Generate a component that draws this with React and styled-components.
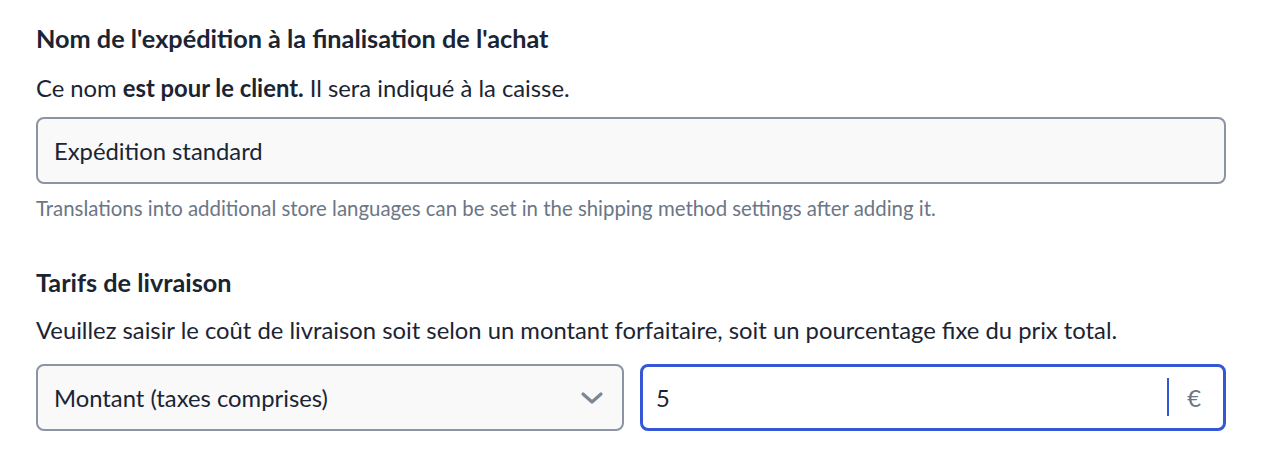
import React from "react";
import styled, { createGlobalStyle } from "styled-components";

const Global = createGlobalStyle`
  html, body { margin: 0; padding: 0; background: #ffffff; }
  body { font-family: Lato, "Open Sans", sans-serif; color: #1b2433; -webkit-font-smoothing: antialiased; }
  * { box-sizing: border-box; }
`;

const Page = styled.div`
  width: 1284px;
  padding: 22px 58px 0 36px;
  display: flex;
  flex-direction: column;
`;

const Section = styled.section`
  display: flex;
  flex-direction: column;
  margin-bottom: ${(p) => p.$mb || 0}px;
`;

const Title = styled.h2`
  margin: 0;
  font-size: 25.25px;
  line-height: 32px;
  font-weight: 700;
  color: #1b2433;
`;

const Desc = styled.p`
  margin: ${(p) => p.$mt || 16}px 0 ${(p) => p.$mb || 15}px;
  font-size: 23.8px;
  line-height: 32px;
  font-weight: 400;
  color: #1b2433;
  b { font-weight: 700; }
`;

const Field = styled.div`
  height: 67px;
  border: ${(p) => (p.$focus ? "3px solid #3557d6" : "2px solid #8b94a2")};
  border-radius: 8px;
  background: ${(p) => (p.$focus ? "#ffffff" : "#f9f9fa")};
  display: flex;
  align-items: center;
  padding-left: ${(p) => (p.$focus ? 13 : 16)}px;
  min-width: 0;
  font-size: 23.8px;
  color: #1b2433;
`;

const FieldText = styled.span`
  flex: 1;
`;

const Hint = styled.p`
  margin: 12px 0 0;
  font-size: 20.4px;
  line-height: 24px;
  color: #6b7686;
`;

const Row = styled.div`
  display: grid;
  grid-template-columns: 588px 1fr;
  gap: 16px;
`;

const Chevron = styled.svg`
  width: 24px;
  height: 14px;
  margin-right: 18px;
`;

const Suffix = styled.div`
  display: flex;
  align-items: center;
  height: 100%;
  padding: 0 22px 0 20px;
  position: relative;
  color: #6b7686;
  font-size: 23.8px;
  &::before {
    content: "";
    position: absolute;
    left: 0;
    top: 11px;
    bottom: 12px;
    width: 2px;
    background: #3557d6;
  }
`;

export default function App() {
  return (
    <>
      <Global />
      <Page>
        <Section $mb={46}>
          <Title>Nom de l'expédition à la finalisation de l'achat</Title>
          <Desc $mt={18} $mb={13}>
            Ce nom <b>est pour le client.</b> Il sera indiqué à la caisse.
          </Desc>
          <Field>
            <FieldText>Expédition standard</FieldText>
          </Field>
          <Hint>
            Translations into additional store languages can be set in the shipping method settings after adding it.
          </Hint>
        </Section>
        <Section>
          <Title>Tarifs de livraison</Title>
          <Desc $mb={18}>
            Veuillez saisir le coût de livraison soit selon un montant forfaitaire, soit un pourcentage fixe du prix total.
          </Desc>
          <Row>
            <Field>
              <FieldText>Montant (taxes comprises)</FieldText>
              <Chevron viewBox="0 0 24 14">
                <path d="M3 3 L12 11 L21 3" fill="none" stroke="#7c8796" strokeWidth="3.2" strokeLinecap="round" strokeLinejoin="round" />
              </Chevron>
            </Field>
            <Field $focus>
              <FieldText>5</FieldText>
              <Suffix>€</Suffix>
            </Field>
          </Row>
        </Section>
      </Page>
    </>
  );
}
